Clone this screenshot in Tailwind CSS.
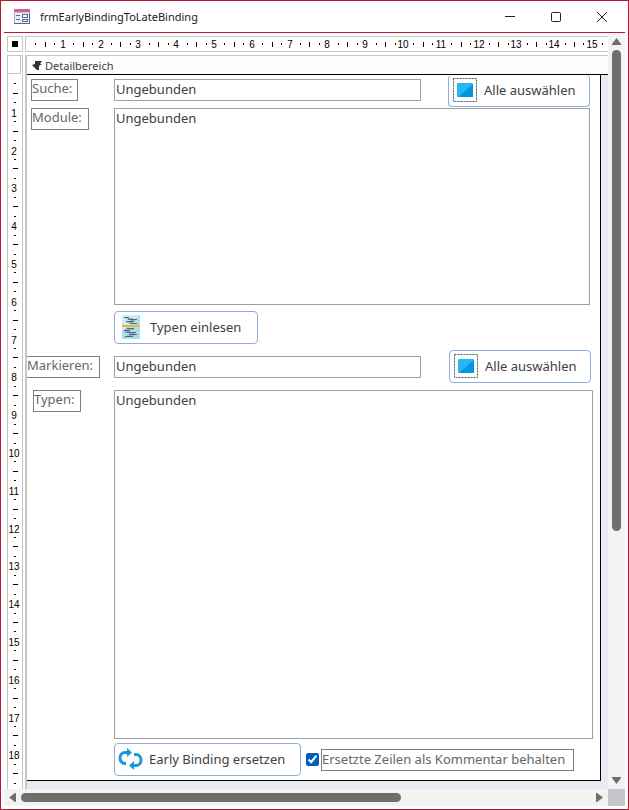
<!DOCTYPE html>
<html lang="de">
<head>
  <meta charset="UTF-8">
  <meta name="viewport" content="width=device-width, initial-scale=1.0">
  <title>frmEarlyBindingToLateBinding</title>
  <script src="https://cdn.jsdelivr.net/npm/@tailwindcss/browser@4"></script>
</head>

<body class="bg-white font-['Noto_Sans',sans-serif] text-[13px] leading-5 text-[#404040]">

  <div class="min-h-screen flex flex-col border border-[#b01c30] px-[3px] pb-[3px]">

    <!-- title bar -->
    <header class="h-8 shrink-0 flex items-center border-b border-[#b01c30]">
      <svg class="ml-2.5 shrink-0" width="16" height="16" viewBox="0 0 16 16" shape-rendering="crispEdges">
        <rect x="0.5" y="0.5" width="15" height="14" fill="#eef1f8" stroke="#a3abc8" />
        <rect width="16" height="3" fill="#c8688f" />
        <rect y="3" width="16" height="1" fill="#e3b3c8" />
        <path d="M2 6h4v1H2zM2 10h4v1H2z" fill="#5a6a98" />
        <path d="M8 5h6v4H8zM8 10h6v3H8z" fill="#5a6a98" />
        <path d="M9 6h4v2H9zM9 11h4v1H9z" fill="#fff" />
        <path d="M0 14h16v1H0zM15 4h1v11h-1z" fill="#5b6595" />
      </svg>
      <h1 class="ml-2.5 flex-1 text-[11px] text-[#1a1a1a]">frmEarlyBindingToLateBinding</h1>
      <div class="flex h-full">
        <button class="w-[46px] flex items-center justify-center" aria-label="Minimieren">
          <svg width="12" height="12" viewBox="0 0 12 12"><path d="M1 5.500h10" stroke="#222" /></svg>
        </button>
        <button class="w-[46px] flex items-center justify-center" aria-label="Maximieren">
          <svg width="12" height="12" viewBox="0 0 12 12"><rect x="1.5" y="1.5" width="9" height="9" rx="1" fill="none" stroke="#222" /></svg>
        </button>
        <button class="w-[46px] flex items-center justify-center" aria-label="Schließen">
          <svg width="12" height="12" viewBox="0 0 12 12"><path d="M1 1l10 10M11 1L1 11" stroke="#222" /></svg>
        </button>
      </div>
    </header>

    <div class="flex-1 grid grid-cols-[minmax(0,1fr)_17px] grid-rows-[1fr_17px]">

      <div class="flex gap-0.5 pl-[3px] pt-[3px]">

        <!-- form selector and vertical ruler -->
        <div class="w-4 shrink-0 flex flex-col gap-[3px]">
          <button class="h-4 shrink-0 border border-[#c6c6c6] flex items-center justify-center" aria-label="Formular markieren">
            <span class="size-1.5 bg-black"></span>
          </button>
          <div class="flex-1 flex flex-col border-x border-t border-[#c6c6c6]">
            <button class="h-[18px] w-[13px] shrink-0 border-r border-b border-[#c6c6c6]" aria-label="Detailbereich markieren"></button>
            <svg id="vruler" class="flex-1 min-h-0 basis-0 w-full"></svg>
          </div>
        </div>

        <div class="flex-1 min-w-0 flex flex-col gap-[3px]">
          <div class="h-4 shrink-0 border-y border-l border-[#c6c6c6]">
            <svg id="hruler" class="w-full h-full"></svg>
          </div>

          <div class="flex-1 flex flex-col border-l-2 border-[#c6c6c6] bg-[#e7eaf0]">
            <div class="h-5 shrink-0 flex items-center gap-[3px] pl-[5px] pt-0.5 bg-[#fdfdfd] border-t border-t-[#c6c6c6] border-b border-b-black text-[11px]">
              <svg width="10" height="10" viewBox="0 0 10 10"><path d="M3 0h7L8 3h2L7 5v4L5 9 0 4l3-1z" fill="#333" /></svg>
              <h2>Detailbereich</h2>
            </div>

            <!-- detail section -->
            <form class="flex-1 flex flex-col mr-[7px] mb-2 border-r border-b border-black bg-white pb-1">
              <div class="flex items-start pr-2.5">
                <div class="w-[87px] shrink-0 pt-1 pl-1">
                  <label for="suche" class="block w-[47px] h-[22px] leading-4 border border-[#808080] text-[#666]">Suche:</label>
                </div>
                <input id="suche" type="text" value="Ungebunden" class="mt-1 h-[22px] w-[307px] min-w-0 border border-[#a0a0a0] px-px pb-0.5">
                <button type="button" class="ml-auto h-8 w-[142px] shrink-0 flex items-center gap-[7px] pl-1 pb-0.5 border border-t-0 border-[#8faedb] rounded-sm">
                  <svg width="24" height="24" viewBox="0 0 24 24">
                    <rect x="0.5" y="0.5" width="23" height="23" fill="none" stroke="#455a64" stroke-dasharray="2 1" />
                    <rect x="4" y="5" width="16" height="14" rx="1" fill="#29b6f6" />
                    <path d="M20 6v12q0 1-1 1H5z" fill="#0396df" />
                  </svg>
                  Alle auswählen
                </button>
              </div>

              <div class="flex items-start mt-px pr-2.5">
                <div class="w-[87px] shrink-0 pl-1">
                  <label for="module" class="block w-[58px] h-[22px] leading-4 border border-[#808080] text-[#666]">Module:</label>
                </div>
                <select id="module" multiple class="h-[197px] flex-1 min-w-0 appearance-none overflow-hidden border border-[#a0a0a0]">
                  <option class="px-px py-0">Ungebunden</option>
                </select>
              </div>

              <button type="button" class="mt-1.5 ml-[87px] h-[33px] w-36 flex items-center gap-2.5 pl-[7px] pb-0.5 border border-[#8faedb] rounded-sm">
                <svg width="18" height="24" viewBox="0 0 18 24">
                  <rect width="18" height="24" fill="#a9def2" />
                  <path d="M0 0h18L0 16z" fill="#ccecf8" />
                  <path d="M2 2.500h5M6 4.500h9M4 6.500h8M8 8.500h7M5 13.500h7M2 15.500h6M4 17.500h10M7 19.500h8M3 21.500h8" stroke="#4f6b79" />
                  <path d="M4 3.500h7M8 5.500h5M5 7.500h6M3 14.500h9M2 16.500h6M7 18.500h6M5 20.500h7" stroke="#8fb3c2" />
                  <rect y="10" width="18" height="2" fill="#fbb321" />
                </svg>
                Typen einlesen
              </button>

              <div class="flex items-start mt-1.5 pr-[9px]">
                <div class="w-[87px] shrink-0 pt-1.5">
                  <label for="markieren" class="block w-[73px] h-[22px] leading-4 border border-l-0 border-[#808080] text-[#666]">Markieren:</label>
                </div>
                <input id="markieren" type="text" value="Ungebunden" class="mt-1.5 h-[22px] w-[307px] min-w-0 border border-[#a0a0a0] px-px pb-0.5">
                <button type="button" class="ml-auto h-[33px] w-[142px] shrink-0 flex items-center gap-[7px] pl-1 pb-0.5 border border-[#8faedb] rounded-sm">
                  <svg width="24" height="24" viewBox="0 0 24 24">
                    <rect x="0.5" y="0.5" width="23" height="23" fill="none" stroke="#455a64" stroke-dasharray="2 1" />
                    <rect x="4" y="5" width="16" height="14" rx="1" fill="#29b6f6" />
                    <path d="M20 6v12q0 1-1 1H5z" fill="#0396df" />
                  </svg>
                  Alle auswählen
                </button>
              </div>

              <div class="flex-1 flex items-stretch mt-[7px] pr-[7px]">
                <div class="w-[87px] shrink-0 pl-1.5">
                  <label for="typen" class="block w-12 h-[22px] leading-4 border border-[#808080] text-[#666]">Typen:</label>
                </div>
                <select id="typen" multiple class="flex-1 min-w-0 min-h-[200px] appearance-none overflow-hidden border border-[#a0a0a0]">
                  <option class="px-px py-0">Ungebunden</option>
                </select>
              </div>

              <div class="flex items-center mt-1 pl-[87px]">
                <button type="button" class="h-[33px] w-[187px] shrink-0 flex items-center gap-1.5 pl-[3px] pb-0.5 border border-[#8faedb] rounded-sm">
                  <svg width="25" height="22" viewBox="0 0 25 22">
                    <path d="M8 15.500H7A5 5.500 0 0 1 7 4.500h3" fill="none" stroke="#1a98dc" stroke-width="3" />
                    <path d="M9 0l5 4.500L9 9z" fill="#1a98dc" />
                    <path d="M16 6.500h2A5 5.500 0 0 1 18 17.500h-3" fill="none" stroke="#1a98dc" stroke-width="3" />
                    <path d="M16 13l-5 4.500 5 4.500z" fill="#1a98dc" />
                  </svg>
                  Early Binding ersetzen
                </button>
                <input id="kommentar" type="checkbox" checked class="ml-[5px] size-[13px] shrink-0 accent-[#005fb8]">
                <label for="kommentar" class="ml-0.5 h-[22px] w-[253px] leading-[18px] border border-[#808080] text-[#666] whitespace-nowrap">Ersetzte Zeilen als Kommentar behalten</label>
              </div>
            </form>
          </div>
        </div>
      </div>

      <!-- vertical scroll bar -->
      <div class="flex flex-col bg-[#f3f3f3]">
        <button class="h-[17px] shrink-0 flex items-center justify-center" aria-label="Nach oben">
          <svg width="9" height="7" viewBox="0 0 9 7"><path d="M4.500 0L9 6v1H0V6z" fill="#6e6e6e" /></svg>
        </button>
        <div class="flex-1 flex flex-col items-center">
          <div class="w-[9px] h-2/3 rounded-full bg-[#6e6e6e]"></div>
        </div>
        <button class="h-[17px] shrink-0 flex items-center justify-center" aria-label="Nach unten">
          <svg width="9" height="7" viewBox="0 0 9 7"><path d="M4.500 7L9 1V0H0v1z" fill="#6e6e6e" /></svg>
        </button>
      </div>

      <!-- horizontal scroll bar -->
      <div class="flex bg-[#f3f3f3]">
        <button class="w-[17px] shrink-0 flex items-center justify-center" aria-label="Nach links">
          <svg width="7" height="9" viewBox="0 0 7 9"><path d="M0 4.500L6 0h1v9H6z" fill="#6e6e6e" /></svg>
        </button>
        <div class="flex-1 flex items-center">
          <div class="h-[9px] w-2/3 rounded-full bg-[#6e6e6e]"></div>
        </div>
        <button class="w-[17px] shrink-0 flex items-center justify-center" aria-label="Nach rechts">
          <svg width="7" height="9" viewBox="0 0 7 9"><path d="M7 4.500L1 0H0v9h1z" fill="#6e6e6e" /></svg>
        </button>
      </div>
      <div class="bg-[#c5c6ca]"></div>
    </div>
  </div>

  <script>
    // one centimetre at 96 dpi
    const cm = 96 / 2.54;

    function drawRuler(id, vertical) {
      const svg = document.querySelector(id);
      const box = svg.getBoundingClientRect();
      const length = vertical ? box.height : box.width;
      let marks = '';
      const mark = (pos, size) => {
        const p = Math.round(pos);
        if (p >= length) return;
        marks += vertical
          ? `<rect x="${7 - Math.floor(size / 2)}" y="${p}" width="${size}" height="1" />`
          : `<rect x="${p}" y="${7 - Math.floor(size / 2)}" width="1" height="${size}" />`;
      };
      for (let start = 0, n = 1; start < length; start += cm, n++) {
        mark(start + cm / 4, 2);
        mark(start + cm / 2, 5);
        mark(start + cm * 3 / 4, 2);
        const end = Math.round(start + cm);
        if (end + 8 > length) continue;
        marks += vertical
          ? `<text x="6" y="${end + 5}" text-anchor="middle">${n}</text>`
          : `<text x="${end - 1}" y="11" text-anchor="middle">${n}</text>`;
      }
      svg.innerHTML =
        `<g fill="#000" font-family="Liberation Sans, Arial, sans-serif" font-size="10">${marks}</g>`;
    }

    function drawRulers() {
      drawRuler('#hruler', false);
      drawRuler('#vruler', true);
    }

    window.addEventListener('load', drawRulers);
    window.addEventListener('resize', drawRulers);
    drawRulers();
  </script>
</body>

</html>
